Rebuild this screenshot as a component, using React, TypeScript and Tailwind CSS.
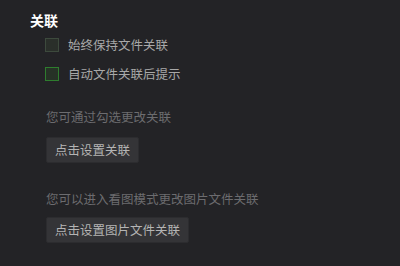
export default function App() {
  const font = { fontFamily: '"Noto Sans CJK SC", "Liberation Sans", sans-serif' };
  return (
    <div className="w-[400px] h-[266px] bg-[#232326] overflow-hidden" style={font}>
      <div className="pl-[30px] pt-[11px]">
        <h2 className="text-[14px] leading-[18px] font-bold text-white">关联</h2>
        <div className="pl-[15px] mt-[9px] flex flex-col gap-[15px]">
          <label className="flex items-center gap-[9px]">
            <span className="w-[14px] h-[14px] border border-[#3d4a3d] bg-[#2a2f2a]" />
            <span className="text-[12.5px] leading-[14px] text-[#a8a8a8]">始终保持文件关联</span>
          </label>
          <label className="flex items-center gap-[9px]">
            <span className="w-[14px] h-[14px] border border-[#2e7d2e] bg-[#263226]" />
            <span className="text-[12.5px] leading-[14px] text-[#a8a8a8]">自动文件关联后提示</span>
          </label>
        </div>
        <div className="pl-[16px] mt-[29px]">
          <p className="text-[12.5px] leading-[14px] text-[#6c6c6f]">您可通过勾选更改关联</p>
          <button className="mt-[13px] h-[26px] px-[8px] bg-[#343437] border border-[#2c2c2f] rounded-[2px] text-[12.5px] text-[#b4b4b4]">
            点击设置关联
          </button>
          <p className="mt-[29px] text-[12.5px] leading-[14px] text-[#6c6c6f]">您可以进入看图模式更改图片文件关联</p>
          <button className="mt-[11px] h-[26px] px-[8px] bg-[#343437] border border-[#2c2c2f] rounded-[2px] text-[12.5px] text-[#b4b4b4]">
            点击设置图片文件关联
          </button>
        </div>
      </div>
    </div>
  );
}
